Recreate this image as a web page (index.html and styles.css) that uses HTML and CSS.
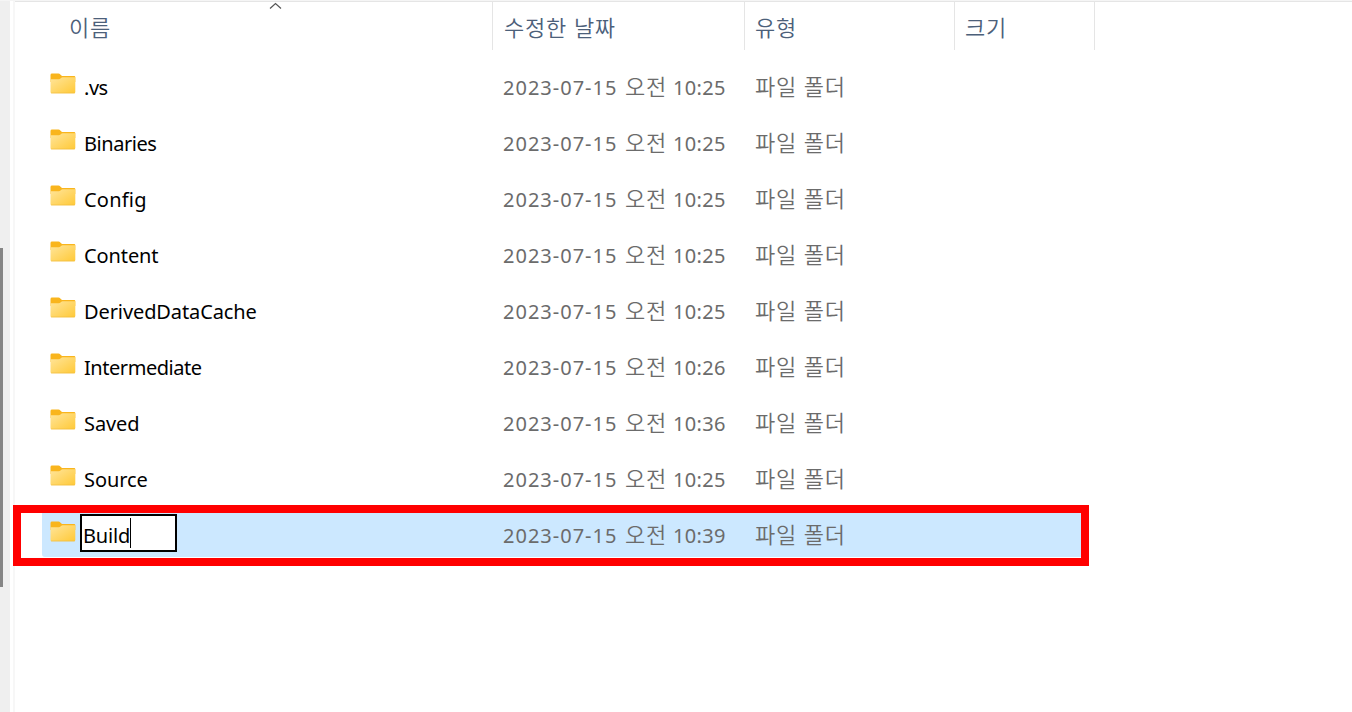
FILE: index.html
```html
<!DOCTYPE html>
<html lang="ko">
<head>
<meta charset="utf-8">
<title>파일 탐색기</title>
<link rel="stylesheet" href="styles.css">
</head>
<body>
<svg class="defs" width="0" height="0" aria-hidden="true">
  <defs>
    <linearGradient id="front" x1="0" y1="0" x2="1" y2="1"><stop offset="0" stop-color="#ffe59b"/><stop offset="1" stop-color="#ffc937"/></linearGradient>
    <symbol id="folder" viewBox="0 0 26 21">
      <path d="M.5 2Q.5.6 2 .6H8.5Q9.6.6 10.3 1.4L12 3.1H24.2Q25.3 3.1 25.3 4.2V9H.5Z" fill="#f9b51d"/>
      <path d="M.5 6.2H8.8Q9.8 6.2 10.5 5.5L11.3 4.7Q11.8 4.2 12.6 4.2H25.3V19Q25.3 20.3 24 20.3H1.8Q.5 20.3.5 19Z" fill="url(#front)"/>
      <path d="M1 20H24.8" stroke="#efb93b" stroke-width=".6"/>
    </symbol>
  </defs>
</svg>
<div class="explorer">
  <aside class="gutter"><div class="thumb"></div></aside>
  <div class="divider"></div>
  <main class="files">
    <header class="header">
      <div class="head name-head"><span>이름</span><svg class="sort" width="13" height="8" viewBox="0 0 13 8"><path d="M1 6.5 6.5 1.5 12 6.5" fill="none" stroke="#555" stroke-width="1.2"/></svg></div>
      <div class="head date-head">수정한 날짜</div>
      <div class="head type-head">유형</div>
      <div class="head size-head">크기</div>
    </header>
    <div class="list">
      <div class="row"><svg class="icon"><use href="#folder"/></svg><span class="name tight">.vs</span><span class="date"><span class="day">2023-07-15</span><span class="ko">오전</span><span class="time">10:25</span></span><span class="type">파일 폴더</span></div>
      <div class="row"><svg class="icon"><use href="#folder"/></svg><span class="name tight">Binaries</span><span class="date"><span class="day">2023-07-15</span><span class="ko">오전</span><span class="time">10:25</span></span><span class="type">파일 폴더</span></div>
      <div class="row"><svg class="icon"><use href="#folder"/></svg><span class="name loose">Config</span><span class="date"><span class="day">2023-07-15</span><span class="ko">오전</span><span class="time">10:25</span></span><span class="type">파일 폴더</span></div>
      <div class="row"><svg class="icon"><use href="#folder"/></svg><span class="name">Content</span><span class="date"><span class="day">2023-07-15</span><span class="ko">오전</span><span class="time">10:25</span></span><span class="type">파일 폴더</span></div>
      <div class="row"><svg class="icon"><use href="#folder"/></svg><span class="name">DerivedDataCache</span><span class="date"><span class="day">2023-07-15</span><span class="ko">오전</span><span class="time">10:25</span></span><span class="type">파일 폴더</span></div>
      <div class="row"><svg class="icon"><use href="#folder"/></svg><span class="name tight">Intermediate</span><span class="date"><span class="day">2023-07-15</span><span class="ko">오전</span><span class="time">10:26</span></span><span class="type">파일 폴더</span></div>
      <div class="row"><svg class="icon"><use href="#folder"/></svg><span class="name">Saved</span><span class="date"><span class="day">2023-07-15</span><span class="ko">오전</span><span class="time">10:36</span></span><span class="type">파일 폴더</span></div>
      <div class="row"><svg class="icon"><use href="#folder"/></svg><span class="name">Source</span><span class="date"><span class="day">2023-07-15</span><span class="ko">오전</span><span class="time">10:25</span></span><span class="type">파일 폴더</span></div>
      <div class="row selected"><svg class="icon"><use href="#folder"/></svg><span class="name"><span class="edit">Build<i class="caret"></i></span></span><span class="date"><span class="day">2023-07-15</span><span class="ko">오전</span><span class="time">10:39</span></span><span class="type">파일 폴더</span></div>
    </div>
    <div class="highlight"></div>
  </main>
</div>
</body>
</html>
```

FILE: styles.css
```css
* { box-sizing: border-box; }
body { margin: 0; background: #fff; font-family: "Noto Sans", "Noto Sans CJK KR", sans-serif; }
.defs { position: absolute; }
.explorer { display: flex; width: 1352px; height: 712px; overflow: hidden; border-top: 1px solid #f5f5f5; }
.gutter { width: 10px; background: #efefef; padding-top: 247px; }
.thumb { width: 3px; height: 339px; background: #858585; }
.divider { width: 5px; border-left: 3px solid #fff; background: #f7f7f7; }
.files { position: relative; flex: 1; border-top: 1px solid #e5e5e5; }
.header { display: flex; height: 49px; }
.head { position: relative; height: 48px; border-right: 1px solid #e5e5e5; color: #4c607a; font: 350 22px/48px "Noto Sans CJK KR", sans-serif; letter-spacing: .75px; white-space: nowrap; }
.name-head { width: 478px; padding-left: 54px; }
.date-head { width: 252px; padding-left: 11px; }
.type-head { width: 210px; padding-left: 10px; }
.size-head { width: 140px; padding-left: 10px; }
.sort { position: absolute; left: 254px; top: 0; }
.list { padding: 8px 0 0 27px; }
.row { display: flex; align-items: center; width: 1039px; height: 56px; padding-left: 8px; font-size: 20px; white-space: nowrap; }
.icon { width: 26px; height: 21px; margin-top: -8px; flex: none; }
.name { width: 427px; padding-left: 8px; color: #000; letter-spacing: -.1px; }
.tight { letter-spacing: -.45px; }
.loose { letter-spacing: .2px; }
.date { display: flex; align-items: center; width: 252px; color: #6b6b6b; }
.day { width: 122px; letter-spacing: 1px; }
.ko { width: 48px; font: 350 22px/30px "Noto Sans CJK KR", sans-serif; letter-spacing: .7px; margin-top: -5px; }
.time { letter-spacing: .3px; }
.type { color: #6b6b6b; font: 350 22px/30px "Noto Sans CJK KR", sans-serif; letter-spacing: .7px; margin-top: -5px; }
.selected { height: 45px; margin-top: 5px; background: #cce8ff; border-bottom-left-radius: 3px; }
.selected .icon { margin-top: -6px; }
.selected .date, .selected .type { padding-top: 1px; }
.selected .name { padding-left: 4px; letter-spacing: -.15px; }
.edit { display: flex; align-items: center; width: 97px; height: 38px; margin-top: -4px; padding: 5px 0 0 1px; border: 2px solid #000; background: #fff; }
.caret { width: 1px; height: 30px; background: #000; margin-top: -5px; }
.highlight { position: absolute; left: -2px; top: 503px; width: 1076px; height: 61px; border: 8px solid #f00; }
```
